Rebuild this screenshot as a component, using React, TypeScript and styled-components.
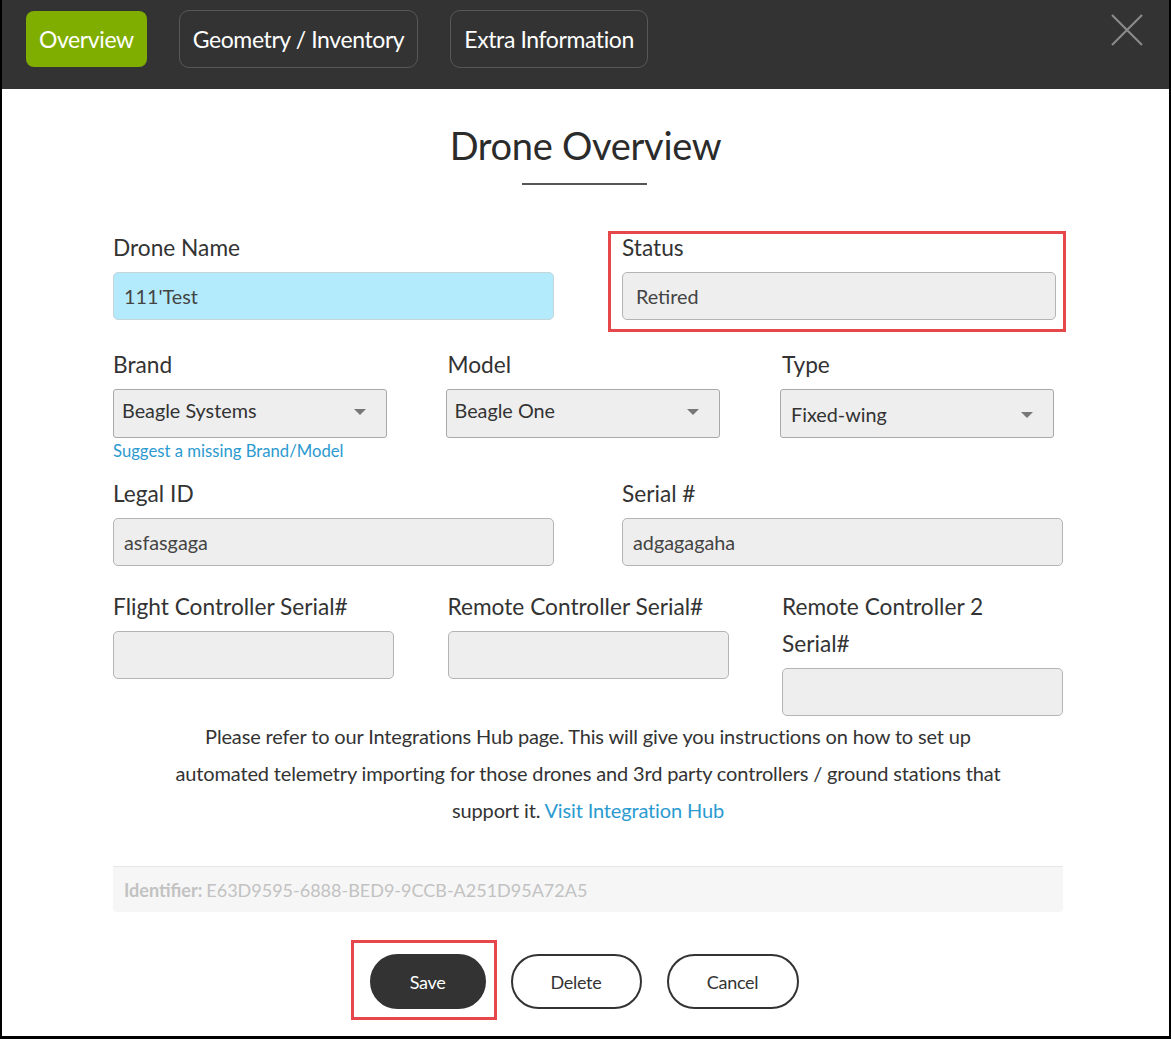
import React from 'react';
import styled, { createGlobalStyle } from 'styled-components';

const GlobalStyle = createGlobalStyle`
  html, body { margin: 0; padding: 0; background: #fff; }
  body { font-family: Lato, "Open Sans", sans-serif; color: #333; }
  * { box-sizing: border-box; }
`;

const Frame = styled.div`
  width: 1171px;
  height: 1039px;
  border-left: 2px solid #000;
  border-right: 2px solid #000;
  border-bottom: 3px solid #000;
  display: flex;
  flex-direction: column;
  overflow: hidden;
  background: #fff;
`;

const Header = styled.header`
  height: 89px;
  flex: none;
  background: #333;
  display: flex;
  align-items: flex-start;
  padding: 10px 26px 0 24px;
  gap: 32px;
`;

const Tab = styled.div<{ $active?: boolean }>`
  height: ${(p) => (p.$active ? '56px' : '58px')};
  padding: 0 13px;
  display: flex;
  align-items: center;
  border-radius: ${(p) => (p.$active ? '8px' : '10px')};
  background: ${(p) => (p.$active ? '#80ae00' : 'transparent')};
  border: ${(p) => (p.$active ? 'none' : '1px solid #585858')};
  color: #fff;
  font-size: 23px;
  letter-spacing: -0.4px;
  margin-top: ${(p) => (p.$active ? '1px' : '0')};
`;

const Spacer = styled.div`
  flex: 1;
`;

const CloseButton = styled.div`
  width: 32px;
  height: 32px;
  margin-top: 4px;
  display: flex;
  align-items: center;
  justify-content: center;
`;

const Main = styled.main`
  flex: 1;
  display: flex;
  flex-direction: column;
`;

const Title = styled.h1`
  margin: 32px 0 0;
  text-align: center;
  font-weight: 400;
  font-size: 38px;
  letter-spacing: -0.3px;
  line-height: 48px;
  color: #2b2b2b;
`;

const TitleRule = styled.div`
  width: 125px;
  height: 2px;
  background: #555;
  margin: 14px auto 0;
  position: relative;
  left: -1px;
`;

const Form = styled.div`
  width: 950px;
  margin-left: 111px;
  margin-top: 44px;
  display: flex;
  flex-direction: column;
`;

const Row = styled.div<{ $cols: number; $top?: number }>`
  display: grid;
  grid-template-columns: ${(p) => (p.$cols === 2 ? '441px 441px' : '281px 281px 281px')};
  column-gap: ${(p) => (p.$cols === 2 ? '68px' : '53.5px')};
  margin-top: ${(p) => p.$top ?? 0}px;
  align-items: start;
`;

const Field = styled.div<{ $marked?: boolean }>`
  display: flex;
  flex-direction: column;
  position: relative;
  ${(p) =>
    p.$marked &&
    `
    &::after {
      content: '';
      position: absolute;
      left: -14px;
      right: -3px;
      top: 2px;
      bottom: -12px;
      border: 3px solid #e5474b;
      pointer-events: none;
    }
  `}
`;

const Label = styled.label`
  font-size: 22.7px;
  line-height: 37px;
  color: #333;
  margin-bottom: 6px;
`;

const Input = styled.div<{ $tone?: 'cyan' | 'grey'; $width?: number; $pad?: number }>`
  height: 48px;
  width: ${(p) => (p.$width ? `${p.$width}px` : '100%')};
  background: ${(p) => (p.$tone === 'cyan' ? '#b3ebfc' : '#eeeeee')};
  border: 1px solid ${(p) => (p.$tone === 'cyan' ? '#c6d5da' : '#b4b4b4')};
  border-radius: 5px;
  display: flex;
  align-items: center;
  padding: 0 ${(p) => p.$pad ?? 10}px;
  font-size: 19.8px;
  color: #444;
`;

const Select = styled.div<{ $raise?: boolean; $shift?: boolean }>`
  height: 49px;
  width: 274px;
  margin-left: ${(p) => (p.$shift ? '-2px' : '0')};
  background: #eeeeee;
  border: 1px solid #a9a9a9;
  border-radius: 3px;
  display: flex;
  align-items: center;
  justify-content: space-between;
  padding: ${(p) => (p.$raise ? '0 20px 7px 8px' : '0 20px 0 10px')};
  font-size: 19.8px;
  color: #333;
`;

const Caret = styled.span`
  width: 0;
  height: 0;
  border-left: 6px solid transparent;
  border-right: 6px solid transparent;
  border-top: 6px solid #777;
  margin-top: 3px;
`;

const HelpLink = styled.a`
  font-size: 16.7px;
  line-height: 20px;
  margin-top: 3px;
  color: #2b9ad0;
  text-decoration: none;
`;

const Note = styled.p`
  margin: 2px 0 0;
  text-align: center;
  font-size: 20px;
  line-height: 37px;
  color: #333;
  letter-spacing: -0.15px;
`;

const NoteLink = styled.a`
  color: #2b9ad0;
  text-decoration: none;
`;

const IdentifierBox = styled.div`
  margin-top: 37px;
  height: 46px;
  background: #f6f6f6;
  border-top: 1px solid #e8e8e8;
  border-radius: 0 0 4px 4px;
  display: flex;
  align-items: center;
  padding: 0 11px;
  font-size: 18px;
  color: #c2c2c2;
`;

const IdLabel = styled.b`
  font-weight: 700;
  margin-right: 4px;
`;

const Actions = styled.div`
  display: flex;
  justify-content: center;
  align-items: center;
  gap: 25px;
  margin-top: 42px;
  padding-right: 3px;
`;

const ActionWrap = styled.div<{ $marked?: boolean }>`
  position: relative;
  ${(p) =>
    p.$marked &&
    `
    &::after {
      content: '';
      position: absolute;
      left: -19px;
      right: -11px;
      top: -14px;
      bottom: -11px;
      border: 3px solid #e5474b;
      pointer-events: none;
    }
  `}
`;

const Button = styled.button<{ $primary?: boolean; $w: number }>`
  width: ${(p) => p.$w}px;
  height: 55px;
  border-radius: 28px;
  font-family: Lato, "Open Sans", sans-serif;
  font-size: 18px;
  letter-spacing: -0.3px;
  background: ${(p) => (p.$primary ? '#333' : '#fff')};
  color: ${(p) => (p.$primary ? '#fff' : '#333')};
  border: 2px solid #333;
  display: flex;
  align-items: center;
  justify-content: center;
  padding: 0;
`;

export default function App() {
  return (
    <>
      <GlobalStyle />
      <Frame>
        <Header>
          <Tab $active>Overview</Tab>
          <Tab>Geometry / Inventory</Tab>
          <Tab>Extra Information</Tab>
          <Spacer />
          <CloseButton>
            <svg width="32" height="32" viewBox="0 0 32 32">
              <path d="M1 1 L31 31 M31 1 L1 31" stroke="#8a8a8a" strokeWidth="2.2" fill="none" />
            </svg>
          </CloseButton>
        </Header>
        <Main>
          <Title>Drone Overview</Title>
          <TitleRule />
          <Form>
            <Row $cols={2}>
              <Field>
                <Label>Drone Name</Label>
                <Input $tone="cyan">111'Test</Input>
              </Field>
              <Field $marked>
                <Label>Status</Label>
                <Input $width={434} $pad={13}>Retired</Input>
              </Field>
            </Row>
            <Row $cols={3} $top={26}>
              <Field>
                <Label>Brand</Label>
                <Select $raise>
                  <span>Beagle Systems</span>
                  <Caret />
                </Select>
                <HelpLink>Suggest a missing Brand/Model</HelpLink>
              </Field>
              <Field>
                <Label>Model</Label>
                <Select $raise $shift>
                  <span>Beagle One</span>
                  <Caret />
                </Select>
              </Field>
              <Field>
                <Label>Type</Label>
                <Select $shift>
                  <span>Fixed-wing</span>
                  <Caret />
                </Select>
              </Field>
            </Row>
            <Row $cols={2} $top={14}>
              <Field>
                <Label>Legal ID</Label>
                <Input>asfasgaga</Input>
              </Field>
              <Field>
                <Label>Serial #</Label>
                <Input>adgagagaha</Input>
              </Field>
            </Row>
            <Row $cols={3} $top={22}>
              <Field>
                <Label>Flight Controller Serial#</Label>
                <Input />
              </Field>
              <Field>
                <Label>Remote Controller Serial#</Label>
                <Input />
              </Field>
              <Field>
                <Label>
                  Remote Controller 2<br />
                  Serial#
                </Label>
                <Input />
              </Field>
            </Row>
            <Note>
              Please refer to our Integrations Hub page. This will give you instructions on how to set up
              <br />
              automated telemetry importing for those drones and 3rd party controllers / ground stations that
              <br />
              support it. <NoteLink>Visit Integration Hub</NoteLink>
            </Note>
            <IdentifierBox>
              <IdLabel>Identifier:</IdLabel>
              E63D9595-6888-BED9-9CCB-A251D95A72A5
            </IdentifierBox>
          </Form>
          <Actions>
            <ActionWrap $marked>
              <Button $primary $w={116}>Save</Button>
            </ActionWrap>
            <ActionWrap>
              <Button $w={131}>Delete</Button>
            </ActionWrap>
            <ActionWrap>
              <Button $w={132}>Cancel</Button>
            </ActionWrap>
          </Actions>
        </Main>
      </Frame>
    </>
  );
}
